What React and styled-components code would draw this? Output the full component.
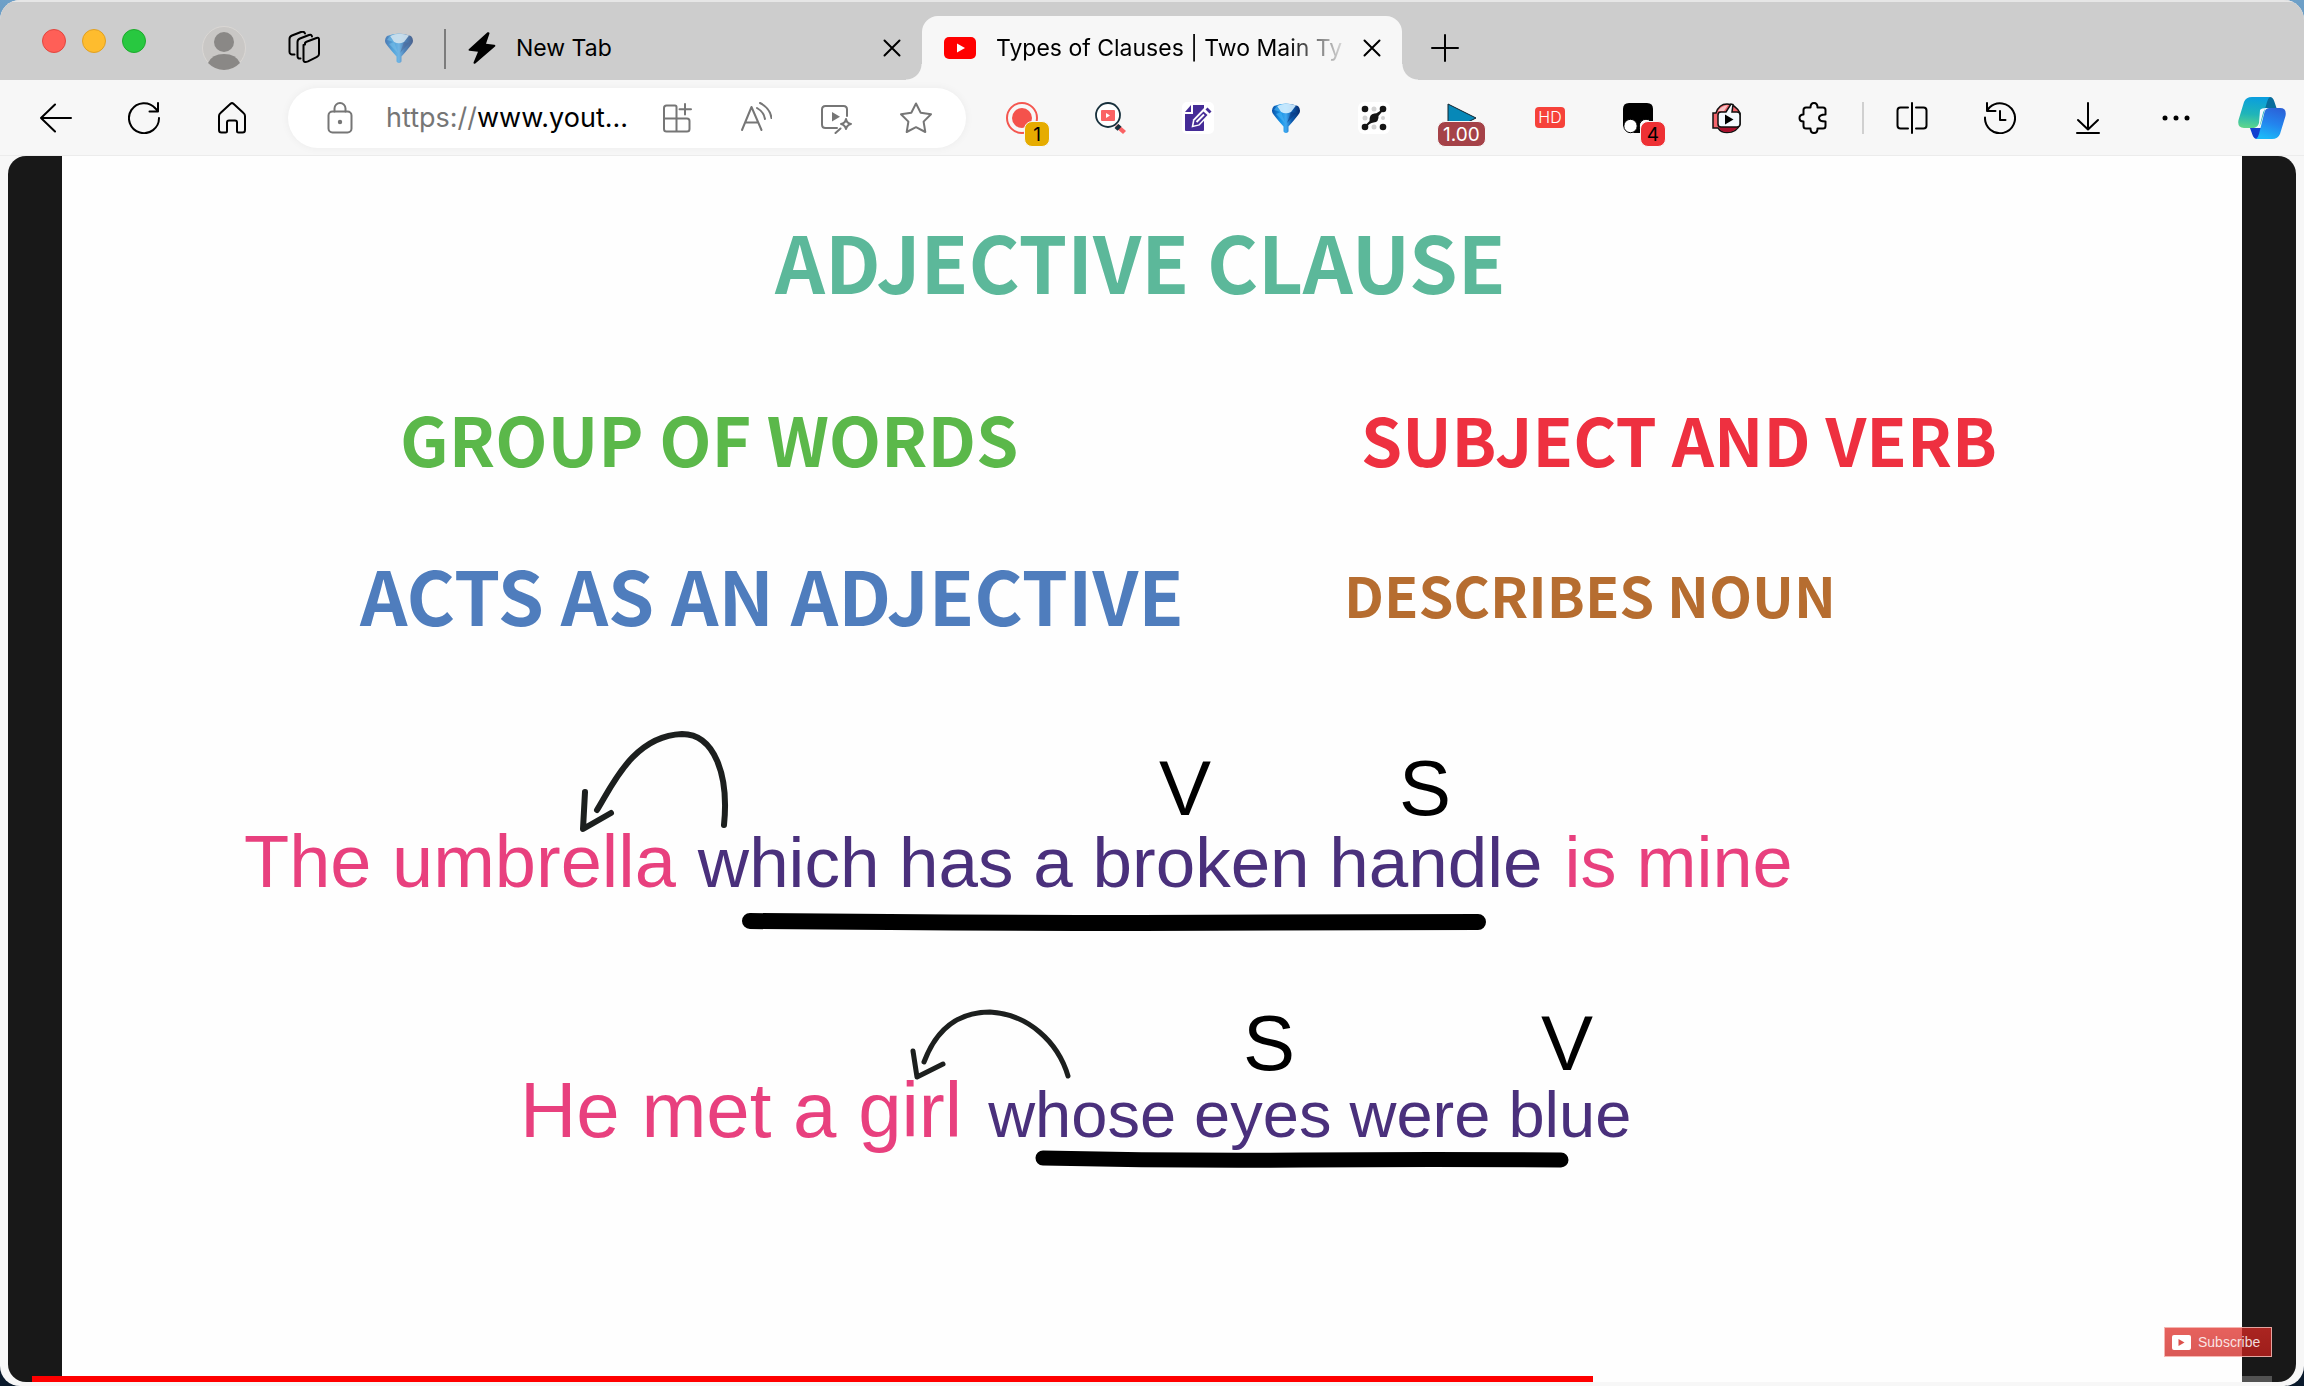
import React from 'react';
import styled, { createGlobalStyle } from 'styled-components';

const UI_FONT = "Inter, 'Liberation Sans', sans-serif";
const SLIDE_FONT = "'Liberation Sans', Arial, sans-serif";
const HEADING_FONT = "'Noto Sans CJK JP', Roboto, sans-serif";

const PINK = '#e8407e';
const PURPLE = '#4a307c';

const Global = createGlobalStyle`
  * { box-sizing: border-box; }
  body {
    margin: 0;
    background: linear-gradient(#6ea0c8, #0a1a2c 50%);
    font-family: ${UI_FONT};
    color: #000;
  }
  button, input {
    font: inherit;
    color: inherit;
    border: 0;
    padding: 0;
    margin: 0;
    background: none;
  }
  svg { display: block; flex: none; }
`;

const Window = styled.div`
  min-height: 100vh;
  display: flex;
  flex-direction: column;
  background: #f7f7f7;
  border-radius: 20px;
  overflow: hidden;
`;

/* Tab strip */

const TabStrip = styled.header`
  display: flex;
  align-items: flex-end;
  height: 80px;
  background: #cdcdcd;
  border-top: 2px solid #e6e6e6;
`;

const Lights = styled.div`
  display: flex;
  gap: 16px;
  height: 78px;
  padding: 27px 48px 0 42px;
`;

const Light = styled.button`
  width: 24px;
  height: 24px;
  border-radius: 50%;
  background: ${(p) => p.$fill};
  border: 1px solid ${(p) => p.$edge};
`;

const StripButton = styled.button`
  display: flex;
  align-items: center;
  justify-content: center;
  width: ${(p) => p.$w}px;
  height: 64px;
`;

const StripDivider = styled.span`
  width: 2px;
  height: 40px;
  margin-bottom: 11px;
  background: #7c7c7c;
`;

const Tab = styled.div`
  display: flex;
  align-items: center;
  height: 64px;
  width: ${(p) => (p.$active ? 480 : 476)}px;
  padding: 0 12px 0 22px;
  gap: 20px;
  position: relative;
  ${(p) =>
    p.$active
      ? `
    background: #f7f7f7;
    border-radius: 16px 16px 0 0;
    &::before, &::after {
      content: '';
      position: absolute;
      bottom: 0;
      width: 16px;
      height: 16px;
    }
    &::before { left: -16px; background: radial-gradient(circle at 0 0, transparent 15px, #f7f7f7 16px); }
    &::after { right: -16px; background: radial-gradient(circle at 100% 0, transparent 15px, #f7f7f7 16px); }
  `
      : ''}
`;

const TabTitle = styled.button`
  flex: 1;
  min-width: 0;
  overflow: hidden;
  white-space: nowrap;
  text-align: left;
  font-size: 23px;
  line-height: 32px;
  ${(p) =>
    p.$fade &&
    'mask-image: linear-gradient(90deg, #000 calc(100% - 64px), transparent); -webkit-mask-image: linear-gradient(90deg, #000 calc(100% - 64px), transparent);'}
`;

const CloseButton = styled.button`
  width: 36px;
  height: 36px;
  display: flex;
  align-items: center;
  justify-content: center;
  margin-left: -16px;
`;

/* Toolbar */

const Toolbar = styled.nav`
  display: flex;
  align-items: center;
  height: 76px;
  padding-left: 12px;
  border-bottom: 1px solid #ececec;
`;

const ToolButton = styled.button`
  position: relative;
  flex: none;
  display: flex;
  align-items: center;
  justify-content: center;
  width: ${(p) => p.$w || 88}px;
  height: 60px;
  color: ${(p) => p.$color || '#000'};
`;

const AddressBar = styled.form`
  flex: 1;
  min-width: 0;
  display: flex;
  align-items: center;
  height: 60px;
  margin: 0 12px;
  padding: 0 10px 0 12px;
  border-radius: 30px;
  background: #fff;
  box-shadow: 0 0 8px rgba(0, 0, 0, 0.05);
`;

const AddressField = styled.div`
  flex: 1;
  min-width: 0;
  display: flex;
  align-items: center;
  padding-left: 6px;
  font-size: 27px;
  line-height: 40px;
`;

const Scheme = styled.label`
  color: #767676;
`;

const AddressInput = styled.input`
  flex: 1;
  min-width: 0;
  height: 40px;
  outline: 0;
`;

const ToolDivider = styled.span`
  width: 2px;
  height: 32px;
  margin: 0 4px;
  background: #d0d0d0;
`;

const Badge = styled.span`
  position: absolute;
  top: 33px;
  left: ${(p) => (p.$wide ? 19 : 46)}px;
  min-width: 26px;
  height: 26px;
  padding: 0 5px;
  border: 1px solid #f7f7f7;
  border-radius: 8px;
  background: ${(p) => p.$fill};
  color: ${(p) => p.$ink};
  font-size: 19px;
  line-height: 25px;
  text-align: center;
`;

const HdMark = styled.span`
  width: 30px;
  height: 21px;
  border-radius: 4px;
  background: #f6423a;
  color: #fff;
  font-size: 16px;
  font-weight: 300;
  line-height: 21px;
  text-align: center;
`;

/* Player */

const Player = styled.main`
  position: relative;
  flex: 1;
  display: flex;
  margin: 0 8px 4px;
  padding: 0 54px;
  border-radius: 18px;
  background: #181818;
  overflow: hidden;
`;

const Slide = styled.article`
  flex: 1;
  min-width: 0;
  background: #fefefe;
`;

const Heading = styled.h2`
  margin: 0;
  font-family: ${HEADING_FONT};
  font-weight: 700;
  font-size: ${(p) => p.$size}px;
  line-height: 100px;
  color: ${(p) => p.$color};
  white-space: nowrap;
`;

const TitleRow = styled.div`
  display: flex;
  padding: 54px 0 0 713px;
`;

const PointRow = styled.div`
  display: grid;
  grid-template-columns: ${(p) => p.$split}px 1fr;
  padding: ${(p) => p.$top}px 0 0 ${(p) => p.$left}px;
`;

const Sentence = styled.p`
  position: relative;
  display: flex;
  align-items: baseline;
  margin: ${(p) => p.$top}px 0 0 ${(p) => p.$left}px;
  gap: ${(p) => p.$gap}px;
  font-family: ${SLIDE_FONT};
  line-height: 100px;
  white-space: nowrap;
`;

const Phrase = styled.span`
  font-size: ${(p) => p.$size}px;
  color: ${(p) => p.$color};
`;

const Mark = styled.span`
  position: absolute;
  left: ${(p) => p.$x}px;
  top: ${(p) => p.$y}px;
  font-size: 78px;
  line-height: 80px;
  color: #000;
`;

const Drawing = styled.svg`
  position: absolute;
  left: ${(p) => p.$x}px;
  top: ${(p) => p.$y}px;
  overflow: visible;
`;

const Subscribe = styled.button`
  position: absolute;
  right: 24px;
  bottom: 25px;
  display: flex;
  align-items: center;
  gap: 7px;
  width: 108px;
  height: 30px;
  padding-left: 7px;
  border: 1px solid rgba(255, 220, 215, 0.7);
  background: linear-gradient(rgba(222, 42, 36, 0.74), rgba(205, 32, 28, 0.74));
  color: rgba(255, 255, 255, 0.85);
  font-family: ${SLIDE_FONT};
  font-size: 14px;
`;

const Track = styled.div`
  position: absolute;
  left: 24px;
  right: 24px;
  bottom: 0;
  height: 6px;
  background: rgba(255, 255, 255, 0.25);
`;

const Played = styled.div`
  width: 69.7%;
  height: 6px;
  background: #f00;
`;

/* Icons */

function Line({ w = 32, h = 32, sw = 2, children }) {
  return (
    <svg width={w} height={h} viewBox={`0 0 ${w} ${h}`} fill="none" stroke="currentColor" strokeWidth={sw} strokeLinecap="round" strokeLinejoin="round" aria-hidden="true">
      {children}
    </svg>
  );
}

const Close = () => (
  <Line w={18} h={18}><path d="M1.5 1.5l15 15M16.5 1.5l-15 15" /></Line>
);

function Funnel({ faded, id }) {
  return (
    <svg width="30" height="32" viewBox="0 0 30 32" opacity={faded ? 0.65 : 1} aria-hidden="true">
      <defs>
        <linearGradient id={id} x1="0" x2="1">
          <stop offset="0" stopColor="#0a4fa6" />
          <stop offset=".3" stopColor="#1593e6" />
          <stop offset=".5" stopColor="#3fa8f0" />
          <stop offset=".7" stopColor="#0d5cb0" />
          <stop offset="1" stopColor="#062a6c" />
        </linearGradient>
      </defs>
      <path d="M3 4Q0 7 1.500 11Q4 15 12.500 24.500V29.500q2.500 3 5 0V24.500Q26 15 28.500 11Q30 7 27 4Q15-1 3 4Z" fill={`url(#${id})`} />
      <path d="M6 4Q15 0 25 3.500L20 10Q15 12.500 10 10Z" fill="#d3eeff" opacity=".9" />
      <path d="M6 4L3 8l7 2ZM10 10l4 11-9-9Z" fill="#49b4f5" opacity=".6" />
      <path d="M20 10l-4 11L25 11Z" fill="#0a2f78" opacity=".5" />
    </svg>
  );
}

const Profile = () => (
  <svg width="44" height="44" viewBox="0 0 44 44" aria-hidden="true">
    <circle cx="22" cy="22" r="21.5" fill="#c9c7c5" stroke="#dad7d4" />
    <circle cx="22" cy="16" r="10" fill="#8a8886" />
    <path d="M6 37Q10 28 22 28t16 9Q31 44 22 44T6 37Z" fill="#8a8886" />
  </svg>
);

const Stack = () => (
  <Line w={34} h={34}>
    <path d="M18 13.5q-.5-2 1.500-2.800l10-3.700q2.500-.8 2.500 1.500V23q0 2-2 2.800l-9 4.500Q17 32 16.500 29.500V14Z" />
    <path d="M13.500 27.500q-3 .5-3-2.500V11q0-2.500 2.500-3.500l9-3.500q2.500-1 3 1.500" />
    <path d="M7.500 23.500q-5 .5-5-2.500V8q0-2.500 2.500-3.500l9-3.500q3-1 4 1.500" />
  </Line>
);

const Bolt = () => (
  <svg width="28" height="32" viewBox="0 0 28 32" aria-hidden="true">
    <path d="M19.500.3L.8 17.300q-.8 1.200.7 1.500l8.500 1L5.500 30.500q0 1.800 1.800 1L27 14.500q1-1.400-.8-1.700L18 11.800 21.500 1.500q0-1.700-2-1.200Z" />
  </svg>
);

const YouTube = () => (
  <svg width="32" height="22" viewBox="0 0 32 22" aria-hidden="true">
    <rect width="32" height="22" rx="5" fill="#f00" />
    <path d="M13 6.500v9l8-4.500Z" fill="#fff" />
  </svg>
);

const Back = () => <Line><path d="M31 16H1M15 2.500L1 16l14 13.500" /></Line>;

const Reload = () => (
  <Line><path d="M31 16A15 15 0 1 1 27.500 6.500L30 9M30 1v8.500h-8.500" /></Line>
);

const Home = () => (
  <Line w={30}>
    <path d="M3.500 11L13.500 1.800q1.500-1.300 3 0L26.500 11q1.500 1.200 1.500 3V28q0 2.500-2.500 2.500h-4q-1.500 0-1.500-1.500V20.500q0-2-2-2h-6q-2 0-2 2V29q0 1.500-1.500 1.500h-4Q2 30.500 2 28V14q0-1.800 1.500-3Z" />
  </Line>
);

const Lock = () => (
  <Line w={26}>
    <rect x="1.500" y="9.500" width="23" height="21" rx="4" />
    <path d="M7.500 9.500V6.500a5.500 5.500 0 0 1 11 0v3" />
    <circle cx="13" cy="20" r="1.200" fill="currentColor" />
  </Line>
);

const AddApps = () => (
  <Line>
    <path d="M4 16.500V6q0-2.500 2.500-2.500H15q1.500 0 1.500 1.500v24.500H6.500Q4 29.500 4 27V16.500H27q2.500 0 2.500 2.500V27q0 2.500-2.500 2.500H16.500" />
    <path d="M25 2v10.500M19.500 7.200H31" />
  </Line>
);

const ReadAloud = () => (
  <Line>
    <path d="M2 28L11.500 5l10 23M5.500 20.500H18" />
    <path d="M17 6q7 4 8 11M20 1q10 5 11.500 15" />
  </Line>
);

const VideoMagic = () => (
  <Line>
    <path d="M17 26H5.500Q2 26 2 22.500v-15Q2 4 5.500 4h18Q27 4 27 7.500V14" />
    <path d="M12 10v9.500l8-4.800Z" fill="currentColor" stroke="none" />
    <path d="M26 17q1 4.500 5 5-4 .8-5 5-1-4.200-5-5 4-.5 5-5ZM20.500 26.500L15.500 31" />
  </Line>
);

const Star = () => (
  <Line w={34}>
    <path d="M17 1.500l4.700 9.300 10.300 1.500-7.400 7.300 1.700 10.400L17 25.200 7.700 30l1.700-10.400L2 12.300l10.300-1.500Z" />
  </Line>
);

const RecordIcon = () => (
  <svg width="32" height="32" viewBox="0 0 32 32" aria-hidden="true">
    <circle cx="16" cy="16" r="15" fill="none" stroke="#f4564f" strokeWidth="2" />
    <circle cx="16" cy="16" r="10" fill="#f4524c" />
  </svg>
);

const SearchVideo = () => (
  <svg width="32" height="32" viewBox="0 0 32 32" aria-hidden="true">
    <circle cx="14" cy="13" r="12" fill="#fff" stroke="#17303c" strokeWidth="1.800" />
    <rect x="7" y="8" width="14" height="11" rx="1" fill="#fa6264" />
    <path d="M12 11v5l4-2.500Z" fill="#fff" />
    <path d="M21 25l3-3 8 7-3 3Z" fill="#fa6264" />
    <path d="M20.500 26l4-4 3 2.800-4 4Z" fill="#17303c" />
  </svg>
);

const NoteIcon = () => (
  <svg width="32" height="32" viewBox="0 0 32 32" aria-hidden="true">
    <rect width="32" height="32" rx="5" fill="#fff" />
    <path d="M11 3h11v25q0 1-1 1H4q-1 0-1-1V12h8Z" fill="#452c97" />
    <path d="M9 3v7H3Z" fill="#452c97" />
    <path d="M9.500 25.500l1.500-8L22 6l6.500 6L17.500 23.500Z" fill="#fff" />
    <path d="M11.500 23.500l1-5L21.500 9.500l4 3.500-9 9.500Z" fill="#452c97" />
    <path d="M14.500 20L22 12.500" stroke="#fff" strokeWidth="2" />
    <path d="M23.500 7.500l2-2 4 4-2 2Z" fill="#452c97" />
  </svg>
);

const DotsIcon = () => (
  <svg width="32" height="32" viewBox="0 0 32 32" aria-hidden="true">
    <rect width="32" height="32" rx="6" fill="#fff" />
    <g fill="#d3d3d3"><circle cx="16" cy="7" r="2.500" /><circle cx="7" cy="16" r="2.500" /><circle cx="25" cy="16" r="2" /><circle cx="16" cy="25" r="2.500" /></g>
    <path d="M7 25L12.500 19.500Q12 13 16.500 12.500 21 12 25 7L19.500 13.500Q20 19 15.500 19.500 11 20 7 25Z" fill="#151515" stroke="#151515" strokeWidth="2" />
    <g fill="#151515"><circle cx="7" cy="7" r="3.300" /><circle cx="25" cy="7" r="3.300" /><circle cx="7" cy="25" r="3.300" /><circle cx="25" cy="25" r="3.300" /></g>
  </svg>
);

const SpeedIcon = () => (
  <svg width="32" height="32" viewBox="0 0 32 32" aria-hidden="true">
    <path d="M2 2v28L30 16Z" fill="#0788b8" stroke="#10222c" strokeWidth="1" />
  </svg>
);

const MonkeyIcon = () => (
  <svg width="32" height="32" viewBox="0 0 32 32" aria-hidden="true">
    <path d="M1 24V7q0-6 6-6h18q6 0 6 6v17L28 31H12Z" fill="#000" />
    <circle cx="8.500" cy="24" r="6.700" fill="#fff" stroke="#000" />
    <circle cx="24" cy="24" r="6.700" fill="#fff" stroke="#000" />
  </svg>
);

const ClipIcon = () => (
  <svg width="32" height="32" viewBox="0 0 32 32" aria-hidden="true">
    <path d="M3 26V11H6Q9 2 17 2t13 9v11Q27 30.500 17 30.500 11 30.500 8 26Z" fill="#f4656c" stroke="#111" strokeWidth="1.500" />
    <path d="M8 9Q11 4 18 3L14 9Z" fill="#f8c3c6" />
    <path d="M9 25h19Q24 30 17 30T9 25Z" fill="#a80f2c" />
    <path d="M11 10h5L21 2l2 .5-1 7.500H27q3 0 3 3v9q0 3-3 3H11q-3 0-3-3v-9q0-3 3-3Z" fill="#f4faff" stroke="#111" strokeWidth="1.500" />
    <path d="M15 12.500v10l8.500-5Z" fill="#000" />
  </svg>
);

const Puzzle = () => (
  <Line>
    <path d="M8 5.500H12.500Q12.500 1 16 1t3.500 4.500H25q2.500 0 2.500 2.500v4.500Q21 12.500 21 16t6.500 3.500V24q0 2.500-2.500 2.500H19.500Q19.500 31 16 31t-3.500-4.500H8Q5.500 26.500 5.500 24V19.500Q1.500 19.500 1.500 16T5.500 12.500V8q0-2.500 2.500-2.500Z" />
  </Line>
);

const Split = () => (
  <Line>
    <path d="M16 1v30M12 5.500H4.500Q1.500 5.500 1.500 8.500v15q0 3 3 3H12M20 5.500h7.500q3 0 3 3v15q0 3-3 3H20" />
  </Line>
);

const History = () => (
  <Line>
    <path d="M1 15.500A15 15 0 1 0 5.500 5.500L3 8.500M3 1v8h8.500M16 9v9h5.500" />
  </Line>
);

const Download = () => (
  <Line w={26}><path d="M13 1v26M3 18l10 9.500L23 18M2 31h22" /></Line>
);

const More = () => (
  <svg width="28" height="6" viewBox="0 0 28 6" aria-hidden="true">
    <circle cx="3" cy="3" r="2.500" /><circle cx="14" cy="3" r="2.500" /><circle cx="25" cy="3" r="2.500" />
  </svg>
);

const Copilot = () => (
  <svg width="48" height="42" viewBox="0 0 48 42" aria-hidden="true">
    <defs>
      <linearGradient id="cpA" x1=".4" y1="0" x2=".3" y2="1">
        <stop offset="0" stopColor="#0a9ede" /><stop offset=".55" stopColor="#20b5b8" /><stop offset="1" stopColor="#5fd68a" />
      </linearGradient>
      <linearGradient id="cpB" x1=".7" y1="0" x2=".4" y2="1">
        <stop offset="0" stopColor="#2b62d8" /><stop offset=".5" stopColor="#2384ee" /><stop offset="1" stopColor="#1bb8f8" />
      </linearGradient>
    </defs>
    <path d="M24 0h8q3 0 4.500 5l2 6H28q-3 0-4 4Z" fill="#086c9c" />
    <path d="M12 31h14q3 0 4-4l-6 15h-5q-3 0-4.500-4Z" fill="#1240d0" />
    <path d="M14 0h18q-2 1-3 5l-6 21q-1.500 5-6 5H6q-7 0-5.500-8L6 5q2-5 8-5Z" fill="url(#cpA)" />
    <path d="M31 11h11q7 0 5.500 8L42 37q-2 5-8 5H18q2-1 3-5l5-20q1-6 5-6Z" fill="url(#cpB)" />
    <path d="M22 13q1-2 7-2-3 1-4 5l-4 15h-5q4-1 5-5Z" fill="#f4f8ff" />
  </svg>
);

const PEN = { fill: 'none', stroke: '#1c1f1e', strokeWidth: 6, strokeLinecap: 'round', strokeLinejoin: 'round' };

const extensions = [
  { name: 'Screen recorder', icon: <RecordIcon />, badge: { text: '1', fill: '#e6ac00', ink: '#000' } },
  { name: 'Video search', icon: <SearchVideo /> },
  { name: 'Notes', icon: <NoteIcon /> },
  { name: 'Filter', icon: <Funnel id="funnelTool" /> },
  { name: 'Pattern', icon: <DotsIcon /> },
  { name: 'Playback speed', icon: <SpeedIcon />, badge: { text: '1.00', fill: '#a54248', ink: '#fff', wide: true } },
  { name: 'Auto HD', icon: <HdMark>HD</HdMark> },
  { name: 'User scripts', icon: <MonkeyIcon />, badge: { text: '4', fill: '#ee3034', ink: '#000' } },
  { name: 'Clip enhancer', icon: <ClipIcon /> },
  { name: 'Extensions', icon: <Puzzle /> },
];

export default function App() {
  return (
    <>
      <Global />
      <Window>
        <TabStrip>
          <Lights>
            <Light aria-label="Close window" $fill="#ff5f57" $edge="#e2463f" />
            <Light aria-label="Minimize window" $fill="#febc2e" $edge="#e0a022" />
            <Light aria-label="Zoom window" $fill="#28c840" $edge="#1dab2c" />
          </Lights>
          <StripButton $w={60} aria-label="Profile"><Profile /></StripButton>
          <StripButton $w={100} aria-label="Workspaces"><Stack /></StripButton>
          <StripButton $w={90} aria-label="Pinned tab"><Funnel faded id="funnelTab" /></StripButton>
          <StripDivider />
          <Tab>
            <Bolt />
            <TabTitle>New Tab</TabTitle>
            <CloseButton aria-label="Close New Tab"><Close /></CloseButton>
          </Tab>
          <Tab $active>
            <YouTube />
            <TabTitle $fade>Types of Clauses | Two Main Ty</TabTitle>
            <CloseButton aria-label="Close Types of Clauses"><Close /></CloseButton>
          </Tab>
          <StripButton $w={86} aria-label="New tab">
            <Line w={28} h={28}><path d="M14 1v26M1 14h26" /></Line>
          </StripButton>
        </TabStrip>

        <Toolbar>
          <ToolButton aria-label="Back"><Back /></ToolButton>
          <ToolButton aria-label="Reload"><Reload /></ToolButton>
          <ToolButton aria-label="Home"><Home /></ToolButton>
          <AddressBar onSubmit={(e) => e.preventDefault()}>
            <ToolButton type="button" $w={80} $color="#767676" aria-label="Site information"><Lock /></ToolButton>
            <AddressField>
              <Scheme htmlFor="address">https://</Scheme>
              <AddressInput id="address" defaultValue="www.yout..." />
            </AddressField>
            <ToolButton type="button" $w={80} $color="#767676" aria-label="Add app"><AddApps /></ToolButton>
            <ToolButton type="button" $w={80} $color="#767676" aria-label="Read aloud"><ReadAloud /></ToolButton>
            <ToolButton type="button" $w={80} $color="#767676" aria-label="Enhance video"><VideoMagic /></ToolButton>
            <ToolButton type="button" $w={80} $color="#767676" aria-label="Favorite"><Star /></ToolButton>
          </AddressBar>
          {extensions.map((ext) => (
            <ToolButton key={ext.name} aria-label={ext.name}>
              {ext.icon}
              {ext.badge && (
                <Badge $fill={ext.badge.fill} $ink={ext.badge.ink} $wide={ext.badge.wide}>{ext.badge.text}</Badge>
              )}
            </ToolButton>
          ))}
          <ToolDivider />
          <ToolButton aria-label="Split screen"><Split /></ToolButton>
          <ToolButton aria-label="History"><History /></ToolButton>
          <ToolButton aria-label="Downloads"><Download /></ToolButton>
          <ToolButton aria-label="More"><More /></ToolButton>
          <ToolButton $w={84} aria-label="Copilot"><Copilot /></ToolButton>
        </Toolbar>

        <Player>
          <Slide>
            <TitleRow>
              <Heading as="h1" $size={78} $color="#5cb89a">ADJECTIVE CLAUSE</Heading>
            </TitleRow>
            <PointRow $top={78} $left={338} $split={961}>
              <Heading $size={68} $color="#5bb84a">GROUP OF WORDS</Heading>
              <Heading $size={66} $color="#ee3040">SUBJECT AND VERB</Heading>
            </PointRow>
            <PointRow $top={56} $left={298} $split={984}>
              <Heading $size={74} $color="#4f7dbd">ACTS AS AN ADJECTIVE</Heading>
              <Heading $size={56} $color="#b66d30">DESCRIBES NOUN</Heading>
            </PointRow>

            <Sentence $top={168} $left={182} $gap={22}>
              <Phrase $size={74} $color={PINK}>The umbrella</Phrase>
              <Phrase $size={71} $color={PURPLE}>which has a broken handle</Phrase>
              <Phrase $size={72} $color={PINK}>is mine</Phrase>
              <Mark $x={915} $y={-64}>V</Mark>
              <Mark $x={1155} $y={-64}>S</Mark>
              <Drawing $x={333} $y={-80} width="160" height="110" aria-hidden="true">
                <path d="M20 78C35 54 56 4 105 2C138 2 152 44 147 93" {...PEN} />
                <path d="M8 60L6 97L34 81" {...PEN} />
              </Drawing>
              <Drawing $x={498} $y={101} width="744" height="20" aria-hidden="true">
                <path d="M8 8Q200 10 400 10T736 9" {...PEN} stroke="#000" strokeWidth="16" />
              </Drawing>
            </Sentence>

            <Sentence $top={147} $left={458} $gap={26}>
              <Phrase $size={78} $color={PINK}>He met a girl</Phrase>
              <Phrase $size={65} $color={PURPLE}>whose eyes were blue</Phrase>
              <Mark $x={723} $y={-57}>S</Mark>
              <Mark $x={1021} $y={-57}>V</Mark>
              <Drawing $x={388} $y={-52} width="170" height="80" aria-hidden="true">
                <path d="M16 54C28 22 50 4 82 4C120 6 150 34 160 68" {...PEN} strokeWidth="5" />
                <path d="M5 43L9 69L35 56" {...PEN} strokeWidth="5" />
              </Drawing>
              <Drawing $x={515} $y={90} width="536" height="20" aria-hidden="true">
                <path d="M8 8Q140 11 268 10T526 10" {...PEN} stroke="#000" strokeWidth="15" />
              </Drawing>
            </Sentence>
          </Slide>
          <Subscribe>
            <svg width="19" height="15" viewBox="0 0 19 15" aria-hidden="true">
              <rect width="19" height="15" rx="2" fill="#fff" />
              <path d="M6.500 4v7l6-3.500Z" fill="#dc504c" />
            </svg>
            Subscribe
          </Subscribe>
          <Track><Played /></Track>
        </Player>
      </Window>
    </>
  );
}
